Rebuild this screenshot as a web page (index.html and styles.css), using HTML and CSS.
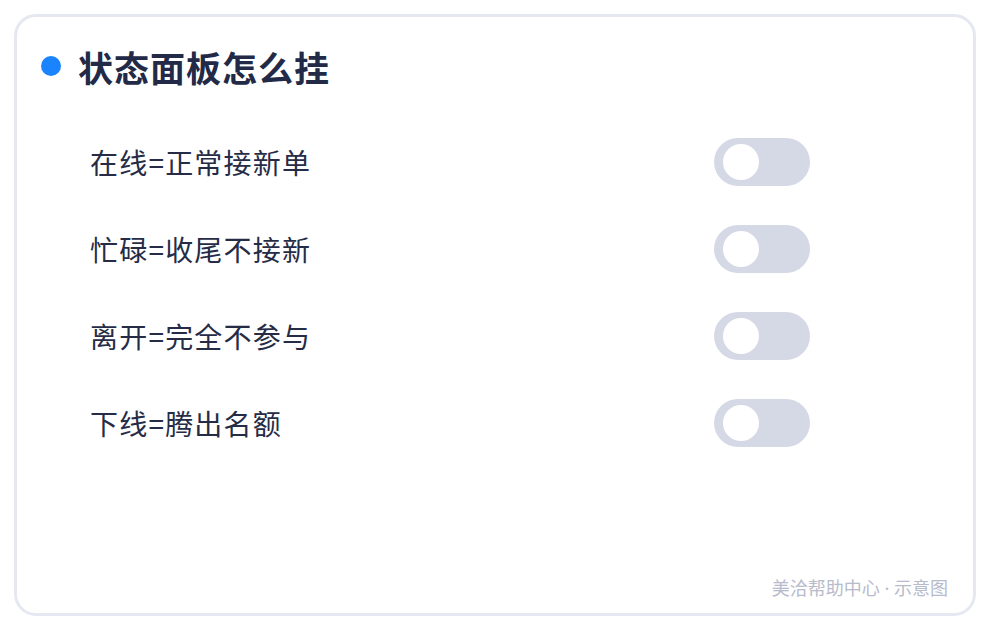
FILE: index.html
```html
<!DOCTYPE html>
<html lang="zh-CN">
<head>
<meta charset="utf-8">
<title>状态面板怎么挂</title>
<link rel="stylesheet" href="styles.css">
</head>
<body>
  <main class="card">
    <h1 class="card-title"><span class="dot"></span>状态面板怎么挂</h1>
    <ul class="status-list">
      <li class="status-row"><span class="status-text">在线=正常接新单</span><span class="toggle"><span class="knob"></span></span></li>
      <li class="status-row"><span class="status-text">忙碌=收尾不接新</span><span class="toggle"><span class="knob"></span></span></li>
      <li class="status-row"><span class="status-text">离开=完全不参与</span><span class="toggle"><span class="knob"></span></span></li>
      <li class="status-row"><span class="status-text">下线=腾出名额</span><span class="toggle"><span class="knob"></span></span></li>
    </ul>
    <footer class="card-footer">美洽帮助中心<span class="sep"> · </span>示意图</footer>
  </main>
</body>
</html>
```

FILE: styles.css
```css
html, body {
  margin: 0;
  padding: 0;
  background: #ffffff;
}

body {
  font-family: "Noto Sans CJK SC", "Noto Sans", sans-serif;
  padding: 14px;
  box-sizing: border-box;
  width: 990px;
  height: 630px;
}

.card {
  box-sizing: border-box;
  width: 962px;
  height: 602px;
  border: 3px solid #e6e8f1;
  border-radius: 22px;
  display: flex;
  flex-direction: column;
  padding: 27px 25px 13px 24px;
}

.card-title {
  margin: 0;
  display: flex;
  align-items: center;
  height: 44px;
  font-size: 35px;
  font-weight: 700;
  color: #222a47;
  letter-spacing: 1px;
}

.dot {
  width: 20px;
  height: 20px;
  border-radius: 50%;
  background: #1a84ff;
  margin-right: 17px;
  flex: none;
}

.status-list {
  list-style: none;
  margin: 30px 0 0 49px;
  padding: 0;
  width: 720px;
}

.status-row {
  height: 87px;
  display: flex;
  align-items: center;
  justify-content: space-between;
}

.status-text {
  font-size: 28px;
  letter-spacing: 1.2px;
  color: #262c46;
}

.toggle {
  width: 96px;
  height: 48px;
  border-radius: 24px;
  background: #d5d9e6;
  display: flex;
  align-items: center;
  padding-left: 9px;
  box-sizing: border-box;
}

.knob {
  width: 36px;
  height: 36px;
  border-radius: 50%;
  background: #ffffff;
}

.card-footer {
  margin-top: auto;
  align-self: flex-end;
  font-size: 18px;
  line-height: 24px;
  color: #b7bbcb;
}

.sep {
  font-family: "Noto Sans", sans-serif;
  white-space: pre;
}
```
